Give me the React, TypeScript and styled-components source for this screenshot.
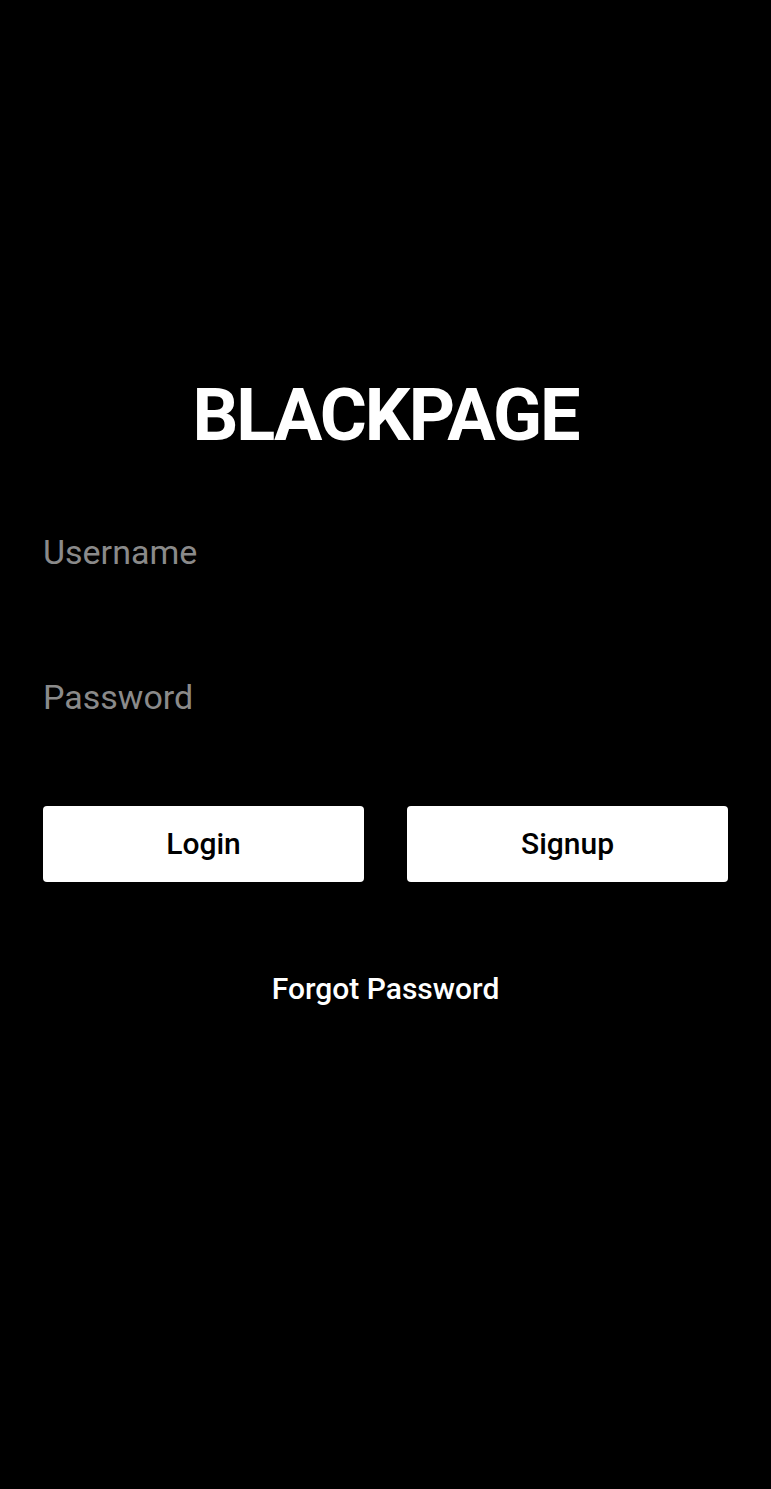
import styled, { createGlobalStyle } from 'styled-components';

const GlobalStyle = createGlobalStyle`
  html, body {
    margin: 0;
    padding: 0;
    background: #000;
  }
  body {
    font-family: Roboto, "Noto Sans", "Liberation Sans", sans-serif;
  }
`;

function App() {
  return (
    <>
      <GlobalStyle />
      <Page>
        <Title>BLACKPAGE</Title>
        <Form>
          <Field type="text" placeholder="Username" />
          <Field type="password" placeholder="Password" />
          <Buttons>
            <Button type="button">Login</Button>
            <Button type="button">Signup</Button>
          </Buttons>
        </Form>
        <Forgot href="#">Forgot Password</Forgot>
      </Page>
    </>
  );
}

export default App;

const Page = styled.div`
  min-height: 1489px;
  box-sizing: border-box;
  padding: 371px 43px 0;
  display: flex;
  flex-direction: column;
  align-items: stretch;
  background: #000;
`;

const Title = styled.h1`
  margin: 0;
  font-size: 72px;
  line-height: 90px;
  font-weight: 700;
  letter-spacing: -2px;
  color: #fff;
  text-align: center;
`;

const Form = styled.div`
  display: flex;
  flex-direction: column;
  gap: 73px;
  margin-top: 55px;
`;

const Field = styled.input`
  height: 72px;
  padding: 0;
  border: none;
  outline: none;
  background: transparent;
  color: #fff;
  font-family: inherit;
  font-size: 34px;

  &::placeholder {
    color: #8a8a8a;
  }
`;

const Buttons = styled.div`
  display: grid;
  grid-template-columns: 1fr 1fr;
  gap: 43px;
`;

const Button = styled.button`
  height: 76px;
  padding: 0 0 2px;
  border: none;
  border-radius: 4px;
  background: #fff;
  color: #000;
  font-family: inherit;
  font-size: 30px;
  font-weight: 500;
  cursor: pointer;
`;

const Forgot = styled.a`
  align-self: center;
  margin-top: 87px;
  line-height: 40px;
  font-size: 30px;
  font-weight: 500;
  color: #fff;
  text-decoration: none;
`;
